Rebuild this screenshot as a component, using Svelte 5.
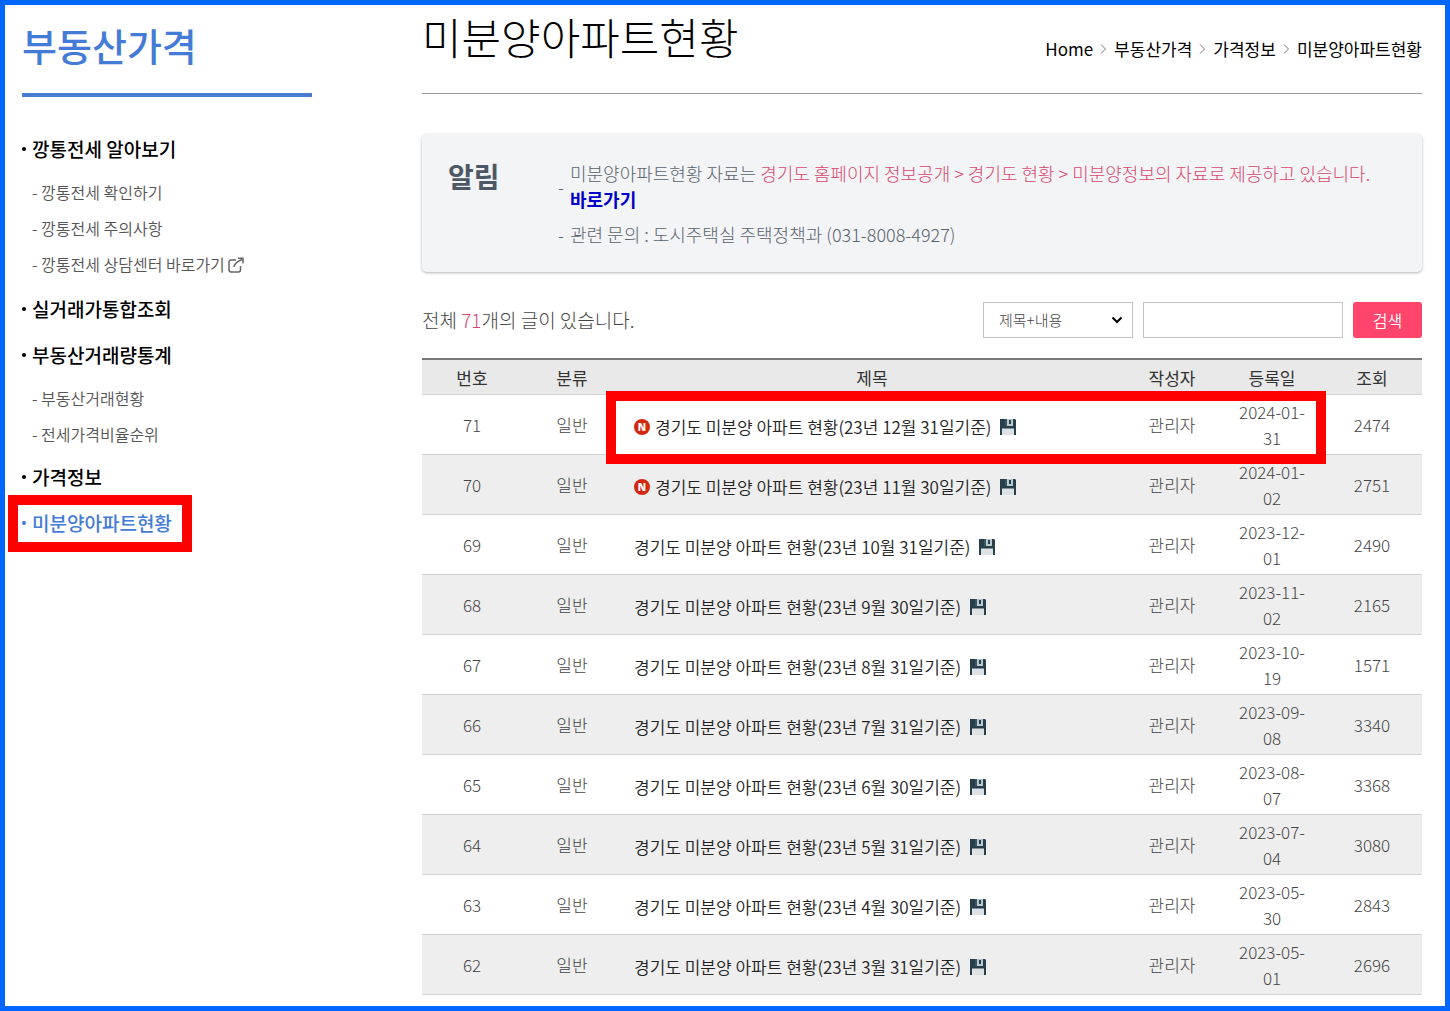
<script lang="ts">
	interface MenuItem {
		label: string;
		active?: boolean;
		children?: { label: string; external?: boolean }[];
	}

	interface Post {
		no: number;
		title: string;
		date: string;
		views: number;
		isNew?: boolean;
		marked?: boolean;
	}

	const menu: MenuItem[] = [
		{
			label: "깡통전세 알아보기",
			children: [
				{ label: "깡통전세 확인하기" },
				{ label: "깡통전세 주의사항" },
				{ label: "깡통전세 상담센터 바로가기", external: true },
			],
		},
		{ label: "실거래가통합조회" },
		{
			label: "부동산거래량통계",
			children: [{ label: "부동산거래현황" }, { label: "전세가격비율순위" }],
		},
		{ label: "가격정보" },
		{ label: "미분양아파트현황", active: true },
	];

	const crumbs = ["Home", "부동산가격", "가격정보", "미분양아파트현황"];

	const posts: Post[] = [
		{ no: 71, title: "23년 12월 31일기준", date: "2024-01-31", views: 2474, isNew: true, marked: true },
		{ no: 70, title: "23년 11월 30일기준", date: "2024-01-02", views: 2751, isNew: true },
		{ no: 69, title: "23년 10월 31일기준", date: "2023-12-01", views: 2490 },
		{ no: 68, title: "23년 9월 30일기준", date: "2023-11-02", views: 2165 },
		{ no: 67, title: "23년 8월 31일기준", date: "2023-10-19", views: 1571 },
		{ no: 66, title: "23년 7월 31일기준", date: "2023-09-08", views: 3340 },
		{ no: 65, title: "23년 6월 30일기준", date: "2023-08-07", views: 3368 },
		{ no: 64, title: "23년 5월 31일기준", date: "2023-07-04", views: 3080 },
		{ no: 63, title: "23년 4월 30일기준", date: "2023-05-30", views: 2843 },
		{ no: 62, title: "23년 3월 31일기준", date: "2023-05-01", views: 2696 },
	];

	let field = $state("both");
	let keyword = $state("");
</script>

<div class="page">
	<aside>
		<h2>부동산가격</h2>
		<ul class="menu">
			{#each menu as item}
				<li>
					<a class="top" class:active={item.active} href="#menu">
						{item.label}
						{#if item.active}<span class="mark"></span>{/if}
					</a>
					{#if item.children}
						<ul class="sub">
							{#each item.children as child}
								<li>
									<a href="#menu">
										- {child.label}
										{#if child.external}
											<svg width="16" height="16" viewBox="0 0 16 16" fill="none" stroke="#666" stroke-width="1.5" aria-hidden="true">
												<path d="M8 3H3.2Q1 3 1 5.2V12.8Q1 15 3.2 15H10.3Q12.5 15 12.5 12.8V9" />
												<path d="M6 10C6.300 6.500 9 4.500 14 2.500M10 1.300H15V6.500" />
											</svg>
										{/if}
									</a>
								</li>
							{/each}
						</ul>
					{/if}
				</li>
			{/each}
		</ul>
	</aside>

	<main>
		<header>
			<h1>미분양아파트현황</h1>
			<nav>
				{#each crumbs as crumb, i}
					{#if i > 0}
						<svg width="7" height="12" viewBox="0 0 7 12" fill="none" stroke="#777" aria-hidden="true">
							<path d="M1 1.500L5.500 6L1 10.500" />
						</svg>
					{/if}
					<a href="#home">{crumb}</a>
				{/each}
			</nav>
		</header>

		<section class="notice">
			<strong class="notice-title">알림</strong>
			<ul>
				<li>
					<span>-</span>
					<p>
						미분양아파트현황 자료는
						<em>경기도 홈페이지 정보공개 &gt; 경기도 현황 &gt; 미분양정보의 자료로 제공하고 있습니다.</em>
						<br /><a href="#go">바로가기</a>
					</p>
				</li>
				<li>
					<span>-</span>
					<p>관련 문의 : 도시주택실 주택정책과 (031-8008-4927)</p>
				</li>
			</ul>
		</section>

		<div class="toolbar">
			<p>전체 <em>71</em>개의 글이 있습니다.</p>
			<form onsubmit={(e) => e.preventDefault()}>
				<div class="select">
					<select aria-label="검색 구분" bind:value={field}>
						<option value="both">제목+내용</option>
						<option value="title">제목</option>
						<option value="body">내용</option>
					</select>
					<svg width="12" height="8" viewBox="0 0 12 8" fill="none" stroke="#000" stroke-width="2" aria-hidden="true">
						<path d="M1.500 1.500L6 6L10.500 1.500" />
					</svg>
				</div>
				<input type="text" aria-label="검색어" bind:value={keyword} />
				<button type="submit">검색</button>
			</form>
		</div>

		<table>
			<thead>
				<tr>
					<th>번호</th>
					<th>분류</th>
					<th class="wide">제목</th>
					<th>작성자</th>
					<th>등록일</th>
					<th>조회</th>
				</tr>
			</thead>
			<tbody>
				{#each posts as post}
					<tr>
						<td>{post.no}</td>
						<td>일반</td>
						<td class="title">
							<div>
								{#if post.isNew}<span class="new">N</span>{/if}
								<a href="#post">경기도 미분양 아파트 현황({post.title})</a>
								<svg class="disk" width="16" height="16" viewBox="0 0 16 16" role="img" aria-label="첨부파일">
									<path d="M0 0H15L16 1V16H0Z" fill="#263f4b" />
									<path d="M5 0H13V7H5Z" fill="#3c5661" />
									<path d="M7 0H13V7H7Z" fill="#b9c8cd" />
									<path d="M9 1H11V5H9Z" fill="#263f4b" />
									<path d="M2 9.500H14V16H2Z" fill="#dce2e5" />
								</svg>
							</div>
							{#if post.marked}<span class="mark"></span>{/if}
						</td>
						<td>관리자</td>
						<td>{post.date}</td>
						<td>{post.views}</td>
					</tr>
				{/each}
			</tbody>
		</table>
	</main>
</div>

<style>
	:global(body) {
		margin: 0;
	}

	* {
		box-sizing: border-box;
	}

	.page {
		display: flex;
		gap: 110px;
		min-height: 100vh;
		padding: 0 23px 8px 17px;
		border: 5px solid #06f;
		background: #fff;
		color: #444;
		font-family: "Noto Sans CJK KR", "Noto Sans", sans-serif;
		font-size: 17px;
		font-weight: 300;
		line-height: 26px;
	}

	h1,
	h2,
	p,
	ul {
		margin: 0;
		padding: 0;
	}

	ul {
		list-style: none;
	}

	a {
		color: inherit;
		text-decoration: none;
	}

	em {
		color: #d9476f;
		font-style: normal;
	}

	/* red highlight boxes */
	.mark {
		position: absolute;
		border: 10px solid #f00;
		pointer-events: none;
	}

	aside {
		flex: 0 0 290px;
	}

	h2 {
		height: 92px;
		padding-top: 12px;
		border-bottom: 4px solid #487bd2;
		color: #437bd6;
		font-size: 38px;
		font-weight: 500;
		line-height: 56px;
	}

	.menu {
		padding-top: 29px;
	}

	.top {
		position: relative;
		display: inline-flex;
		align-items: center;
		height: 46px;
		color: #000;
		font-size: 19px;
		font-weight: 500;
		vertical-align: top;
	}

	.top::before {
		content: "";
		width: 4px;
		height: 4px;
		margin-right: 6px;
		border-radius: 50%;
		background: currentColor;
	}

	.top.active {
		color: #437bd6;
	}

	.top .mark {
		top: -5px;
		right: -20px;
		bottom: -6px;
		left: -14px;
	}

	.sub {
		padding: 2px 0 2px 10px;
		color: #555;
		font-size: 16px;
		font-weight: 350;
		line-height: 36px;
	}

	.sub li:nth-child(3) {
		padding-bottom: 2px;
	}

	.sub svg {
		vertical-align: -2px;
	}

	main {
		flex: 1;
		min-width: 0;
	}

	header {
		display: flex;
		justify-content: space-between;
		height: 89px;
		border-bottom: 1px solid #999;
		color: #000;
	}

	h1 {
		font-size: 43px;
		font-weight: 300;
		line-height: 62px;
	}

	nav {
		display: flex;
		align-items: center;
		gap: 7px;
		font-weight: 400;
	}

	.notice {
		display: flex;
		margin-top: 40px;
		padding: 26px 26px 25px;
		border-radius: 5px;
		background: #f2f4f6;
		box-shadow: 0 1px 3px rgba(0, 0, 0, 0.3);
		color: #5a626c;
		font-size: 18px;
	}

	.notice-title {
		flex: 0 0 110px;
		color: #4d5866;
		font-size: 28px;
		font-weight: 700;
		line-height: 32px;
	}

	.notice li {
		display: flex;
		align-items: center;
		gap: 6px;
	}

	.notice li + li {
		margin-top: 9px;
	}

	.notice a {
		color: #0000c8;
		font-weight: 700;
		line-height: 24px;
	}

	.toolbar {
		display: flex;
		align-items: center;
		justify-content: space-between;
		margin: 30px 0 20px;
		font-size: 19px;
	}

	form {
		display: flex;
		gap: 10px;
		height: 36px;
	}

	.select {
		position: relative;
		width: 150px;
	}

	.select svg {
		position: absolute;
		top: 14px;
		right: 10px;
		pointer-events: none;
	}

	select,
	input {
		height: 100%;
		padding: 0 15px;
		border: 1px solid #c4c4c4;
		border-radius: 0;
		background: #fff;
		color: #444;
		font: inherit;
		font-size: 15px;
	}

	select {
		width: 100%;
		appearance: none;
	}

	input {
		width: 200px;
	}

	button {
		width: 69px;
		padding: 0;
		border: 0;
		border-radius: 3px;
		background: #ff456b;
		color: #fff;
		font: inherit;
		font-size: 16px;
		font-weight: 350;
		cursor: pointer;
	}

	table {
		width: 100%;
		border-top: 2px solid #777;
		border-spacing: 0;
		table-layout: fixed;
	}

	th,
	td {
		padding: 4px 12px 3px;
		border-bottom: 1px solid #d2d2d2;
		text-align: center;
	}

	th {
		width: 10%;
		height: 35px;
		background: #e9e9e9;
		color: #333;
		font-weight: 400;
	}

	.wide {
		width: 50%;
	}

	tbody tr {
		position: relative;
	}

	tr:nth-child(even) td {
		background: #eee;
	}

	.title {
		color: #222;
		font-weight: 350;
	}

	.title div {
		display: flex;
		align-items: center;
		gap: 5px;
		padding-top: 3px;
	}

	.new {
		width: 16px;
		height: 16px;
		border-radius: 50%;
		background: #d3280f;
		color: #fff;
		font-family: "Open Sans", sans-serif;
		font-size: 10px;
		font-weight: 800;
		line-height: 16px;
		text-align: center;
	}

	.disk {
		margin-left: 4px;
	}

	.title .mark {
		z-index: 1;
		top: -4px;
		right: calc(10% - 4px);
		bottom: -9px;
		left: calc(20% - 16px);
	}
</style>
